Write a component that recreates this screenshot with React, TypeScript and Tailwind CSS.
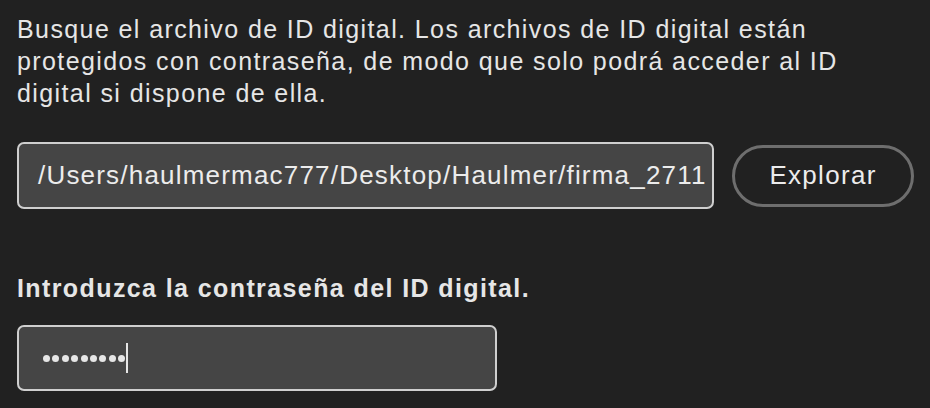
import React from "react";

const PasswordDots: React.FC<{ count: number }> = ({ count }) => {
  return (
    <div className="flex items-center gap-[2.4px]">
      {Array.from({ length: count }).map((_, i) => (
        <span key={i} className="block w-[7px] h-[7px] rounded-full bg-[#e6e6e6]" />
      ))}
    </div>
  );
};

const App: React.FC = () => {
  return (
    <div
      className="w-[930px] h-[408px] bg-[#212121] text-[#e6e6e6] pl-[17px] pt-[13px] overflow-hidden"
      style={{ fontFamily: '"Liberation Sans", Arial, sans-serif' }}
    >
      {/* Intro text */}
      <p className="text-[25px] leading-[32px] tracking-[1.4px] whitespace-nowrap">
        Busque el archivo de ID digital. Los archivos de ID digital están
        <br />
        protegidos con contraseña, de modo que solo podrá acceder al ID
        <br />
        digital si dispone de ella.
      </p>

      {/* File path row */}
      <div className="flex items-center mt-[33px]">
        <div className="w-[697px] h-[67px] flex items-center bg-[#454545] border-2 border-[#cfcfcf] rounded-[7px] pl-[19px] overflow-hidden">
          <span className="whitespace-nowrap text-[26px] tracking-[1.2px] text-[#ececec]">
            /Users/haulmermac777/Desktop/Haulmer/firma_2711
          </span>
        </div>
        <button className="ml-[18px] w-[182px] h-[62px] rounded-full border-[3px] border-[#6e6e6e] bg-[#212121] text-[26px] tracking-[1.3px] text-[#ececec] flex items-center justify-center">
          Explorar
        </button>
      </div>

      {/* Password */}
      <div className="mt-[65px] text-[25px] font-bold leading-[28px] tracking-[1.4px] whitespace-nowrap">
        Introduzca la contraseña del ID digital.
      </div>
      <div className="mt-[23px] w-[480px] h-[66px] flex items-center bg-[#454545] border-2 border-[#cfcfcf] rounded-[7px] pl-[24px]">
        <PasswordDots count={9} />
        <span className="block w-[2px] h-[30px] bg-[#e6e6e6] ml-[1px]" />
      </div>
    </div>
  );
};

export default App;
